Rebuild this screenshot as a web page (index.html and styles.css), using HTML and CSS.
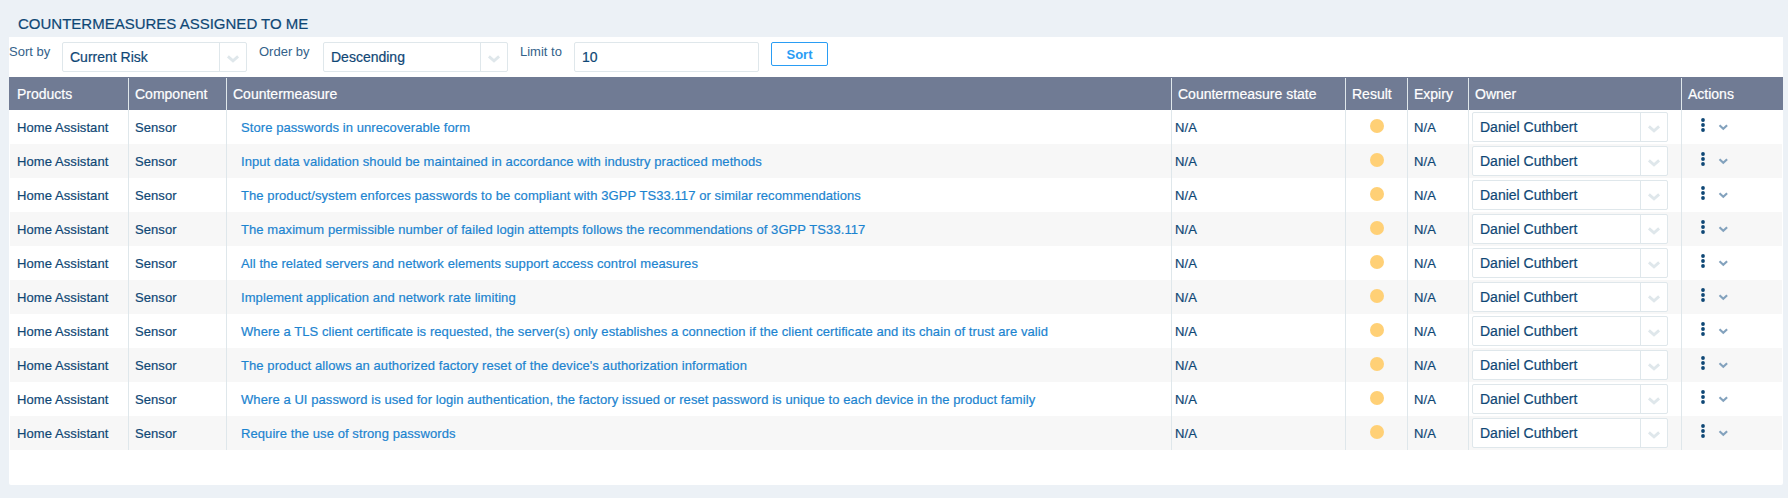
FILE: index.html
```html
<!DOCTYPE html>
<html lang="en">
<head>
<meta charset="utf-8">
<title>Countermeasures assigned to me</title>
<link rel="stylesheet" href="styles.css">
</head>
<body>
<h1 class="title">COUNTERMEASURES ASSIGNED TO ME</h1>
<main class="panel">
  <form class="filters">
    <label class="label">Sort by</label>
    <div class="select filter-select"><span class="value">Current Risk</span><span class="toggle"><svg class="arrow" viewBox="0 0 12 8"><path d="M.9 1.4 6 5.9l5.1-4.5"/></svg></span></div>
    <label class="label order">Order by</label>
    <div class="select filter-select"><span class="value">Descending</span><span class="toggle"><svg class="arrow" viewBox="0 0 12 8"><path d="M.9 1.4 6 5.9l5.1-4.5"/></svg></span></div>
    <label class="label limit">Limit to</label>
    <div class="select filter-input"><span class="value">10</span></div>
    <button class="sort" type="button">Sort</button>
  </form>
  <div class="row head">
    <div>Products</div><div>Component</div><div>Countermeasure</div><div>Countermeasure state</div><div>Result</div><div>Expiry</div><div>Owner</div><div>Actions</div>
  </div>
  <div class="rows" id="rows"></div>
</main>
<script src="rows.js"></script>
</body>
</html>
```
FILE: rows.js
```js
const names = [
  "Store passwords in unrecoverable form",
  "Input data validation should be maintained in accordance with industry practiced methods",
  "The product/system enforces passwords to be compliant with 3GPP TS33.117 or similar recommendations",
  "The maximum permissible number of failed login attempts follows the recommendations of 3GPP TS33.117",
  "All the related servers and network elements support access control measures",
  "Implement application and network rate limiting",
  "Where a TLS client certificate is requested, the server(s) only establishes a connection if the client certificate and its chain of trust are valid",
  "The product allows an authorized factory reset of the device's authorization information",
  "Where a UI password is used for login authentication, the factory issued or reset password is unique to each device in the product family",
  "Require the use of strong passwords"
];
document.getElementById("rows").innerHTML = names.map(name => `
  <div class="row item">
    <div>Home Assistant</div>
    <div>Sensor</div>
    <div class="name"><a>${name}</a></div>
    <div class="state">N/A</div>
    <div class="result"><span class="dot"></span></div>
    <div>N/A</div>
    <div class="owner"><div class="select"><span class="value">Daniel Cuthbert</span><span class="toggle"><svg class="arrow" viewBox="0 0 12 8"><path d="M.9 1.4 6 5.9l5.1-4.5"/></svg></span></div></div>
    <div class="actions">
      <svg class="kebab" viewBox="0 0 4 14"><circle cx="2" cy="2" r="1.9"/><circle cx="2" cy="7" r="1.9"/><circle cx="2" cy="12" r="1.9"/></svg>
      <svg class="more" viewBox="0 0 9 6"><path d="M.5 1.3 4.3 4.7l3.8-3.4"/></svg>
    </div>
  </div>`).join("");
```
FILE: styles.css
```css
* { box-sizing: border-box; }
body {
  margin: 0;
  padding: 0 5px 0 9px;
  height: 498px;
  overflow: hidden;
  background: #ecf1f6;
  color: #0f4775;
  font: 13px "Liberation Sans", Arial, sans-serif;
}
.title {
  margin: 0;
  height: 37px;
  padding: 15px 0 0 9px;
  font-size: 15px;
  font-weight: 400;
  line-height: 18px;
  -webkit-text-stroke: 0.2px;
}
.panel {
  height: 448px;
  background: #fff;
  border-radius: 0 0 2px 2px;
}
.filters {
  display: flex;
  align-items: flex-start;
  height: 40px;
  padding-top: 5px;
}
.label {
  width: 53px;
  line-height: 19px;
  color: #34628a;
}
.order { width: 64px; margin-left: 12px; }
.limit { width: 54px; margin-left: 12px; }
.select {
  display: flex;
  align-items: center;
  height: 30px;
  border: 1px solid #dfe7eb;
  border-radius: 2px;
  background: #fff;
  font-size: 14px;
  letter-spacing: 0;
}
.filter-select, .filter-input { width: 185px; }
.value {
  flex: 1;
  padding-left: 7px;
  -webkit-text-stroke: 0.2px;
}
.toggle {
  display: flex;
  align-items: center;
  justify-content: center;
  width: 27px;
  height: 28px;
  border-left: 1px solid #dfe7eb;
}
.arrow {
  flex: none;
  width: 12px;
  height: 8px;
  margin-top: 3px;
  overflow: visible;
  fill: none;
  stroke: #dfe7eb;
  stroke-width: 2.8;
}
.sort {
  width: 57px;
  height: 24px;
  margin-left: 12px;
  padding: 0;
  border: 1px solid #2a9df4;
  border-radius: 2px;
  background: #fff;
  color: #2a9df4;
  font: bold 13px "Liberation Sans", Arial, sans-serif;
}
.row {
  display: grid;
  grid-template-columns: 119px 98px 945px 174px 62px 61px 213px 100px;
  -webkit-text-stroke: 0.2px;
}
.row > div {
  display: flex;
  align-items: center;
  padding-left: 6px;
  border-right: 1px solid #dfe7eb;
  white-space: nowrap;
}
.row > div:first-child { padding-left: 7px; }
.row > div:last-child { border-right: 0; }
.head {
  height: 33px;
  padding: 1px 1px 0;
  background: #707b94;
  color: #fff;
  font-size: 14px;
}
.rows { padding: 0 1px; }
.item { height: 34px; letter-spacing: 0.08px; }
.item:nth-child(even) { background: #f7f7f7; }
.row > .name { padding-left: 14px; color: #1c84d0; }
.row > .state { padding-left: 3px; }
.row > .result { padding: 0 0 2px 23.5px; }
.dot {
  width: 14px;
  height: 14px;
  border-radius: 50%;
  background: #ffd076;
}
.row > .owner { padding-left: 3px; }
.owner .select { width: 196px; }
.row > .actions {
  align-items: flex-start;
  gap: 14px;
  padding: 8px 0 0 19px;
}
.kebab { width: 4px; height: 14px; fill: #0f4775; }
.more {
  width: 9px;
  height: 6px;
  margin-top: 6px;
  overflow: visible;
  fill: none;
  stroke: #83a2bd;
  stroke-width: 2.2;
}
```
